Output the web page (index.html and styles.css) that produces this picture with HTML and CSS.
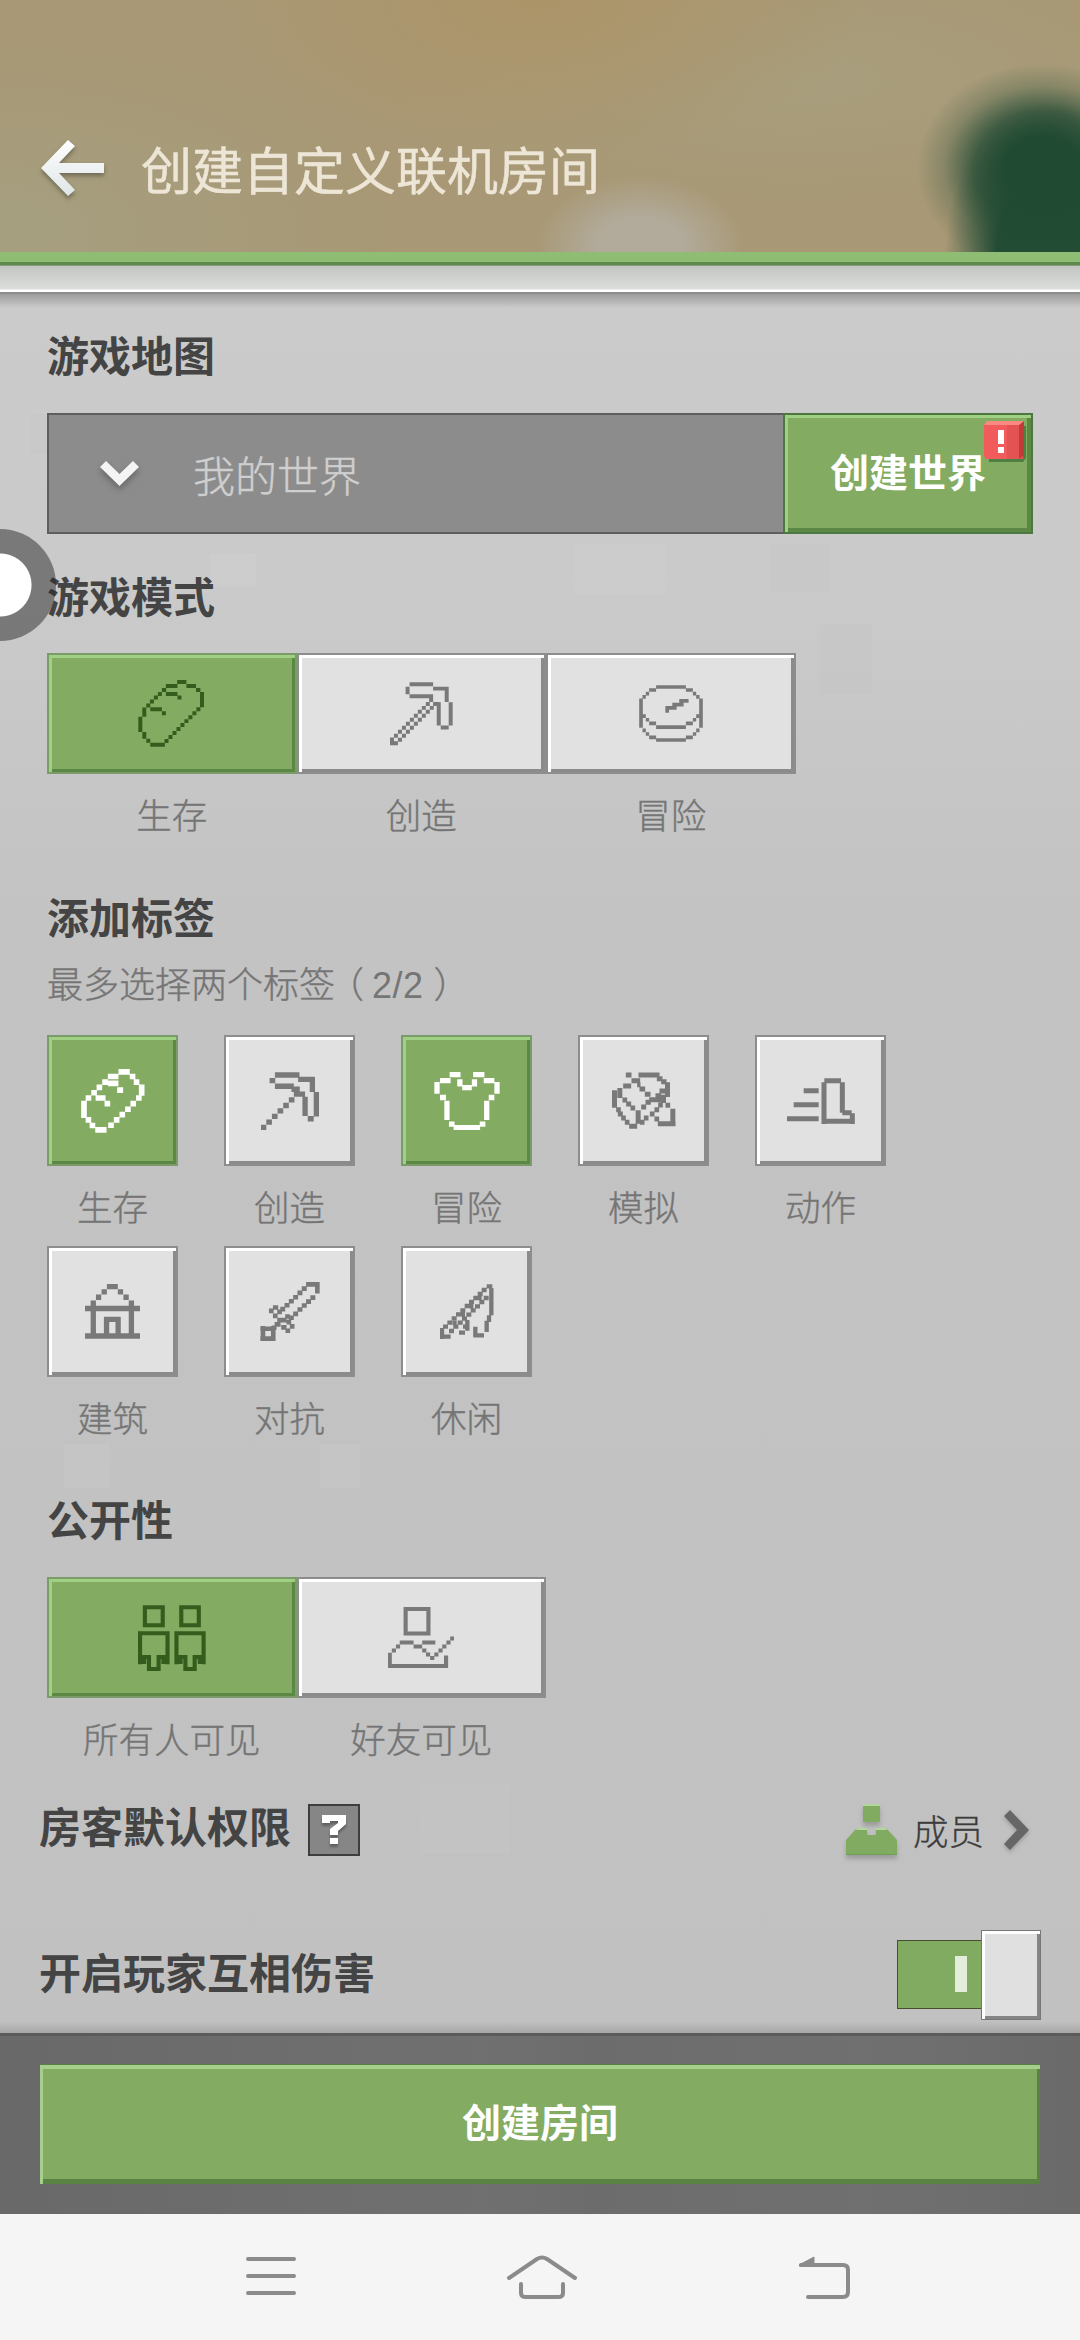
FILE: index.html
```html
<!DOCTYPE html>
<html lang="zh-CN">
<head>
<meta charset="utf-8">
<title>创建自定义联机房间</title>
<link rel="stylesheet" href="styles.css">
</head>
<body>
<div class="app">
  <header class="header">
    <svg class="back" viewBox="0 0 63 56"><defs><linearGradient id="g" x1="0" y1="0" x2="0" y2="1"><stop offset="0" stop-color="#fff"/><stop offset="1" stop-color="#dfe5e5"/></linearGradient></defs><path fill="url(#g)" d="M0 28 27 0l7 6-16 17h45v10H18l16 17-7 6z"/></svg>
    <h1 class="title">创建自定义联机房间</h1>
  </header>
  <div class="grass"></div>
  <div class="ledge"></div>

  <main class="content">
    <h2 class="heading">游戏地图</h2>
    <div class="map">
      <div class="map-select">
        <svg class="chevron" viewBox="0 0 39 25"><path fill="#f4f4f4" d="M0 6 6 0l13.500 13L33 0l6 6-19.500 19z"/></svg>
        <span>我的世界</span>
      </div>
      <button class="map-create green">创建世界
        <svg class="badge" viewBox="0 0 42 41"><path fill="#4e7f43" d="M2 5h40v32l-3 4H5z"/><path fill="#f25b5b" d="M0 3h39v35H2l-2-3z"/><path fill="#d94e4e" d="M23 3h16v35H23z" opacity=".6"/><path fill="#c23a3a" d="M35 3l5-3v34l-5 4z"/><path fill="#f98a82" d="M0 4 3 0h37l-5 4z"/><path fill="#fff" d="M14 9h6v14h-6zM14 26h6v6h-6z"/></svg>
      </button>
    </div>

    <h2 class="heading heading-mode">游戏模式</h2>
    <div class="segments">
      <div class="segment">
        <div class="tile green"><svg class="ico" width="67" height="67" viewBox="300 123 200 202" stroke-width="12"><path d="M417 129h28M383 141h35M445 141h29M371 153h13M474 153h13M359 165h12M383 165h35M492 159v46M347 176h12M418 176h12M335 188h12M324 200h12M336 211h35M371 223h12M318 206v28M306 234v46M475 211h12m-24 12h12m-24 12h12m-24 12h12m-24 12h12m-24 12h12m-24 12h12m-24 12h12m-24 12h12M336 318h44M324 306h12M318 280v20"/></svg></div>
        <span class="label">生存</span>
      </div>
      <div class="segment">
        <div class="tile"><svg class="ico" width="63" height="64" viewBox="-30 128 190 191" stroke-width="12"><path d="M29 134h71M23 141v23M100 147h42M141 141v46M29 170h71M94 170v17M100 193h18M117 188v70M153 188v70M123 264h24M-30 312h24M-24 294v24M-18 289h12m0-12h12m0-12h12m0-12h12m0-12h12m0-12h12m0-12h12m0-12h12m0-12h12M-6 301h12m0-12h12m0-12h12m0-12h12m0-12h12m0-12h12m0-12h12m0-12h12m0-12h12"/></svg></div>
        <span class="label">创造</span>
      </div>
      <div class="segment">
        <div class="tile"><svg class="ico" width="64" height="57" viewBox="717 143 192 172" stroke-width="11"><path d="M768 149h90M747 158h21M858 158h21M737 169h10M879 169h10M727 179h10M889 179h10M722.500 184v88M903.500 184v88M727 237h10M889 237h10M737 248h10M879 248h10M747 259h21M858 259h21M768 270h90M727 280h10M889 280h10M737 291h10M879 291h10M747 301h21M858 301h21M768 309h90M796 221h11M796 212h34M817 202h34M838 191h28"/></svg></div>
        <span class="label">冒险</span>
      </div>
    </div>

    <h2 class="heading heading-tags">添加标签</h2>
    <p class="hint">最多选择两个标签<span class="paren-open">（</span><span class="latin">2/2</span><span class="paren-close">）</span></p>
    <div class="tags">
      <div class="tag"><div class="tile green white"><svg class="ico" width="64" height="64" viewBox="151 565 193 192" stroke-width="17"><path d="M264 573h34M232 587h32M298 587h17M215 604h17M232 608h32M310 604h17M260 628h18M198 620h17M334 611v34M182 636h17M317 652h17M195 652h30M165 652h17M222 669h17M300 669h17m-33 17h17m-34 16h17m-34 16h17m-34 16h17M194 748h34M177 735h17M165 718h17M160 660v52"/></svg></div><span class="label">生存</span></div>
      <div class="tag"><div class="tile"><svg class="ico" width="58" height="58" viewBox="691 573 175 175" stroke-width="16"><path d="M733 582h74M717 599h17M803 595h50M846 588v45M733 616h57M783 625h25M790 640h34M824 648v58M858 633v74M832 714h18M775 657h17m-34 17h17m-34 16h17m-34 17h17m-34 17h17m-34 16h17"/></svg></div><span class="label">创造</span></div>
      <div class="tag"><div class="tile green white"><svg class="ico" width="66" height="58" viewBox="1213 573 197 175" stroke-width="16"><path d="M1259 581h33M1330 581h34M1230 599h32M1290 595v22M1334 595v22M1362 599h32M1297 620h29M1221 603v36M1402 603v36M1230 650h18M1377 650h17M1251 660v58M1371 660v58M1257 730h17M1350 730h17M1271 741h80"/></svg></div><span class="label">冒险</span></div>
      <div class="tag"><div class="tile"><svg class="ico" width="64" height="57" viewBox="215 157 191 171" stroke-width="15"><path d="M256 166h17M294 166h63M273 183h26M349 177h17M362 186h16M248 199h24M290 195h10M297 208h17M313 224h17M326 240h38M381 188v44M357 214h20M345 228h17M238 205v30M222 212v52M246 241h14M257 253h15M270 265h14M293 272v40M227 270h14M232 283h15M242 295h14M253 308h14M266 320h24M302 262h15M315 248h16M369 225v25M375 257h14M397 267v52M352 312h53M342 298h14M328 283h14M342 270h14M353 256h14M310 295h14M298 308h14"/></svg></div><span class="label">模拟</span></div>
      <div class="tag"><div class="tile"><svg class="ico" width="68" height="46" viewBox="738 174 204 138" stroke-width="15"><path d="M788 212h45M758 254h75M738 296h95M849 187v125M850 182h50M904 187v91M904 278h28M934 280v32M842 304h98"/></svg></div><span class="label">动作</span></div>
      <div class="tag"><div class="tile"><svg class="ico" width="55" height="55" viewBox="165 162 166 166" stroke-width="16"><path d="M231 170h33M215 186h16M264 186h16M198 202h16M281 202h16M190 212v100M305 212v100M165 236h166M165 319h166M230 262v57M265 262v57M222 269h50"/></svg></div><span class="label">建筑</span></div>
      <div class="tag"><div class="tile"><svg class="ico" width="60" height="59" viewBox="687 153 179 178" stroke-width="14"><path d="M825 160h41M859 160v28M812 173h15m-28 13h15m-28 13h15m-28 12h15m-28 12h15m-28 12h15M838 200h15m-28 12h15m-28 12h15m-28 12h15m-28 13h15m-28 12h15M713 240h14M725 230h16M725 255h14M738 243h14M738 268h28M762 257h14M750 290h16M763 300h14M776 287h14M766 274h14M730 281h18M722 291h14M695 286v45M726 286v45M687 294h46M687 324h46"/></svg></div><span class="label">对抗</span></div>
      <div class="tag"><div class="tile"><svg class="ico" width="54" height="55" viewBox="1227 162 162 165" stroke-width="13"><path d="M1367 169h17M1381 174v82M1352 180h15m-27 12h15m-28 12h15m-28 12h15m-28 12h15m-28 13h15m-28 12h15m-28 12h15m-28 13h15m-28 12h15M1358 204h15m-28 12h15m-28 13h15m-28 12h15m-28 13h15m-28 12h15m-28 12h15m-28 12h15m-28 13h15M1340 204h12M1315 229h12M1290 254h12M1265 279h12M1233 294v33M1227 320h32M1309 270v32M1284 308h18M1296 290h14M1374 256v20M1367 272v34M1333 290v30M1327 316h32"/></svg></div><span class="label">休闲</span></div>
    </div>

    <h2 class="heading heading-public">公开性</h2>
    <div class="segments">
      <div class="segment">
        <div class="tile green"><svg class="ico" width="68" height="66" viewBox="314 137 198 199" preserveAspectRatio="none" stroke-width="12"><path d="M334 144h52v54h-52zM320 316V222H400V316M326 309h12M382 309h12M330 294h16V330H374V294h20M332 288v26M388 288v26"/><path d="M440 144h51v54h-51zM426 316V222H505V316M432 309h12M488 309h12M436 294h16V330H479V294h20M438 288v26M494 288v26"/></svg></div>
        <span class="label">所有人可见</span>
      </div>
      <div class="segment">
        <div class="tile"><svg class="ico" width="66" height="61" viewBox="1040 143 191 184" preserveAspectRatio="none" stroke-width="12"><path d="M1091 149h66v74h-66zM1074 250h40M1139 250h38M1114 262h25M1063 262h12M1051 274h12M1045 281v46M1045 321h169M1208 289v38M1139 274h12M1150 286h12M1162 297h12M1174 286h12M1186 274h12M1197 262h12M1209 250h12M1220 238h12"/></svg></div>
        <span class="label">好友可见</span>
      </div>
    </div>

    <div class="row row-role">
      <h2 class="heading">房客默认权限</h2>
      <div class="help"><svg width="25" height="30" viewBox="0 0 25 30"><path fill="#fff" d="M0 0h24v9l-8 7v4H8v-6l8-6V6H8v2H0zM8 23h8v6H8z"/></svg></div>
      <div class="role">
        <svg class="member" width="52" height="52" viewBox="0 0 52 52"><path fill="#80ab60" d="M17 1h17v17H17zM0 36 11 24h10v7h9v-7h10l11 12v15H0z"/><path fill="#b2d79c" d="M17 0h17v2H17zM11 24h10v2H10zM30 24h10l1 2H30z"/><path fill="#6f9e55" d="M0 50h51v1H0z"/></svg>
        <span>成员</span>
        <svg class="next" width="25" height="40" viewBox="0 0 25 40"><path fill="#666" d="M0 6 6 0l19 20L6 40l-6-6 13-14z"/></svg>
      </div>
    </div>

    <div class="row row-pvp">
      <h2 class="heading">开启玩家互相伤害</h2>
      <div class="toggle"><span class="track"><i class="on-mark"></i></span><span class="knob"></span></div>
    </div>
  </main>

  <footer class="footer"><button class="submit green">创建房间</button></footer>

  <nav class="nav">
    <svg width="50" height="40" viewBox="0 0 50 40"><path d="M2 3h46M2 20h46M2 37h46"/></svg>
    <svg class="home" width="72" height="46" viewBox="0 0 72 46"><path d="M3 24 31 5q5-3 10 0l28 19M15 30v9q0 4 5 4h32q5 0 5-4V30"/></svg>
    <svg width="52" height="44" viewBox="0 0 52 44"><path d="M2 9h42q5 0 5 5v22q0 5-5 5H9"/><path class="solid" d="M0 9 15 1v9H0z"/></svg>
  </nav>
  <div class="float-ball"></div>
</div>
</body>
</html>
```

FILE: styles.css
```css
* { box-sizing: border-box; margin: 0; padding: 0; }
body { width: 1080px; height: 2340px; overflow: hidden; font-family: "Noto Sans CJK SC", sans-serif; }
button { font: inherit; border: 0; }
svg { display: block; flex: none; }

.app { position: relative; display: flex; flex-direction: column; width: 1080px; height: 2340px; overflow: hidden; }

.header {
  display: flex; align-items: flex-start; gap: 37px;
  height: 252px; padding: 140px 0 0 41px;
  background:
    radial-gradient(ellipse 125px 105px at 1042px 168px, #214a33 30%, rgba(33,74,51,.75) 55%, rgba(33,74,51,.25) 78%, transparent 100%),
    radial-gradient(ellipse 105px 150px at 1050px 252px, #234c34 50%, transparent 100%),
    radial-gradient(ellipse 105px 70px at 640px 246px, #b2ab9b 40%, transparent 100%),
    radial-gradient(ellipse 330px 160px at 540px 0, #ac9468, transparent),
    radial-gradient(ellipse 400px 190px at 0 230px, #a59f80, transparent),
    radial-gradient(ellipse 400px 130px at 800px 80px, #a89e7d, transparent),
    #a89875;
}
.back { width: 63px; height: 56px; filter: drop-shadow(0 3px 2px rgba(60,60,50,.5)); }
.title { margin-top: -9px; font-size: 51px; line-height: 74px; font-weight: 400; color: #ede6d6; -webkit-text-stroke: .5px #ede6d6; }
.grass { height: 14px; background: linear-gradient(#8fbd74 0 10px, #5d8a4b 10px 13px, #8a9a80 13px); }
.ledge { height: 28px; background: linear-gradient(#c3c5c3, #dcdedb 23px, #fff 24px 26px, #8c8c8c 26px); }

.content {
  height: 1739px; padding: 30px 48px 0 47px;
  background:
    linear-gradient(rgba(90,90,90,.42), transparent 14px) 0 0 / 100% 14px no-repeat,
    linear-gradient(transparent, rgba(90,90,90,.25)) 0 100% / 100% 12px no-repeat,
    linear-gradient(rgba(0,0,0,.01) 0 0) 30px 120px / 54px 40px no-repeat,
    linear-gradient(rgba(0,0,0,.01) 0 0) 770px 250px / 60px 48px no-repeat,
    linear-gradient(rgba(0,0,0,.01) 0 0) 820px 330px / 52px 70px no-repeat,
    linear-gradient(rgba(255,255,255,.05) 0 0) 210px 260px / 46px 32px no-repeat,
    linear-gradient(rgba(255,255,255,.04) 0 0) 575px 250px / 90px 50px no-repeat,
    linear-gradient(rgba(255,255,255,.05) 0 0) 64px 1150px / 46px 44px no-repeat,
    linear-gradient(rgba(255,255,255,.05) 0 0) 320px 1150px / 40px 44px no-repeat,
    linear-gradient(rgba(255,255,255,.04) 0 0) 420px 1490px / 90px 70px no-repeat,
    linear-gradient(#cbcbcb, #cacaca 300px, #c3c3c3 640px, #c1c1c1);
}
.heading { font-size: 42px; line-height: 60px; font-weight: 700; color: #444; }

.map { display: flex; width: 986px; height: 121px; margin-top: 29px; }
.map-select {
  display: flex; align-items: center; gap: 54px; flex: 1; padding-left: 51px;
  border: 2px solid #5e5e5e; border-right: 0; background: #8c8c8c;
  font-size: 42px; line-height: 60px; font-weight: 300; color: #cfcfcf; -webkit-text-stroke: .4px #cfcfcf;
}
.chevron { width: 39px; height: 25px; filter: drop-shadow(0 4px 3px rgba(60,60,60,.45)); }
.green { background: #83ab62; }
.map-create {
  position: relative; width: 250px; padding-bottom: 8px; color: #fff; font-size: 39px; font-weight: 700;
  border: 2px solid #4d7740;
  box-shadow: inset 3px 3px #9fd083, inset -4px -4px #5b8945;
}
.badge { position: absolute; right: 5px; top: 6px; width: 42px; height: 41px; }

.heading-mode { margin-top: 31px; }
.heading-tags { margin-top: 47px; }
.heading-public { margin-top: 46px; }

.segments { display: flex; margin-top: 28px; }
.heading-public + .segments { margin-top: 29px; }
.segment { display: flex; flex-direction: column; align-items: center; gap: 15px; width: 249.500px; }
.segment .tile { width: 100%; height: 121px; }
.tile {
  display: flex; align-items: center; justify-content: center;
  border: 2px solid #8d8d8d; background-color: #e1e1e1;
  box-shadow: inset 3px 3px #fff, inset -3px -3px #8b8b8b;
}
.tile.green {
  background-color: #83ab62; border-color: #7c9b6b;
  box-shadow: inset 3px 3px #9fd083, inset -3px -3px #5b8945;
}
.ico { fill: none; stroke: #797979; }
.green .ico { stroke: #345c1c; }
.white .ico { stroke: #fff; }
.label { font-size: 35.500px; line-height: 50px; font-weight: 300; color: #757575; white-space: nowrap; -webkit-text-stroke: .4px #757575; }

.hint { margin-top: 11px; font-size: 36px; line-height: 50px; height: 50px; font-weight: 300; color: #757575; white-space: nowrap; -webkit-text-stroke: .4px #757575; }
.paren-open { margin: 0 8px 0 -7px; }
.paren-close { margin-left: 10px; }
.latin { font-family: "Liberation Sans", sans-serif; letter-spacing: .5px; -webkit-text-stroke: 0; }

.tags { display: grid; grid-template-columns: repeat(5, 131px); column-gap: 46px; row-gap: 15px; margin-top: 28px; }
.tag { display: flex; flex-direction: column; align-items: center; gap: 15px; }
.tag .tile { width: 131px; height: 131px; }

.row { display: flex; margin: 41px -8px 0; height: 52px; }
.row-role .heading { margin-top: -9px; }
.help {
  display: flex; align-items: center; justify-content: center;
  width: 52px; height: 52px; margin-left: 17px; border: 2px solid #3e3e3e; background: #868686;
}
.help svg { filter: drop-shadow(0 3px 1px rgba(60,60,60,.5)); }
.role { display: flex; align-items: center; margin-left: auto; margin-right: 11px; font-size: 35.500px; line-height: 50px; font-weight: 300; color: #3c3c3c; -webkit-text-stroke: .3px #3c3c3c; }
.member { margin-right: 15px; filter: drop-shadow(0 4px 2px rgba(90,90,90,.35)); }
.next { margin-left: 20px; filter: drop-shadow(0 2px 2px rgba(90,90,90,.4)); }

.row-pvp { justify-content: space-between; height: 90px; margin-top: 74px; }
.row-pvp .heading { margin-top: 11px; }
.toggle { display: flex; align-items: center; margin-right: -1px; }
.track { display: flex; align-items: center; justify-content: flex-end; width: 84px; height: 69px; padding-right: 14px; margin-top: -2px; background: #80ab60; border: 1px solid #47502e; border-right: 0; }
.on-mark { width: 12px; height: 36px; background: #e4ecdc; }
.knob { width: 60px; height: 90px; background: #e0e0e0; border: 1px solid #777; box-shadow: inset 3px 3px #fff, inset -3px -3px #858585; }

.footer { display: flex; height: 181px; padding: 31px 40px 0; background: linear-gradient(#5b5b5b 3px, transparent 3px), linear-gradient(90deg, #696969, #717070 45%, #6c6c6c 55%, #707070 80%, #6a6a6a); }
.submit { width: 1001px; height: 120px; padding-bottom: 10px; color: #fff; font-size: 39px; font-weight: 700; border-top: 1px solid #587f45; box-shadow: inset 3px 4px #a5cf8b, inset -3px -5px #588342; }

.nav { display: flex; justify-content: space-between; align-items: flex-start; height: 126px; padding: 42px 229px 0 246px; background: #f5f5f5; }
.nav svg { fill: none; stroke: #8b8b8b; stroke-width: 4; stroke-linecap: round; stroke-linejoin: round; }
.nav .home { margin: -2px 11px 0 0; }
.nav .solid { fill: #8b8b8b; stroke-width: 1; }

.float-ball { position: absolute; left: -56px; top: 529px; width: 112px; height: 112px; border-radius: 50%; background: radial-gradient(circle, #fff 31px, rgba(40,40,40,.5) 32px); }
```
